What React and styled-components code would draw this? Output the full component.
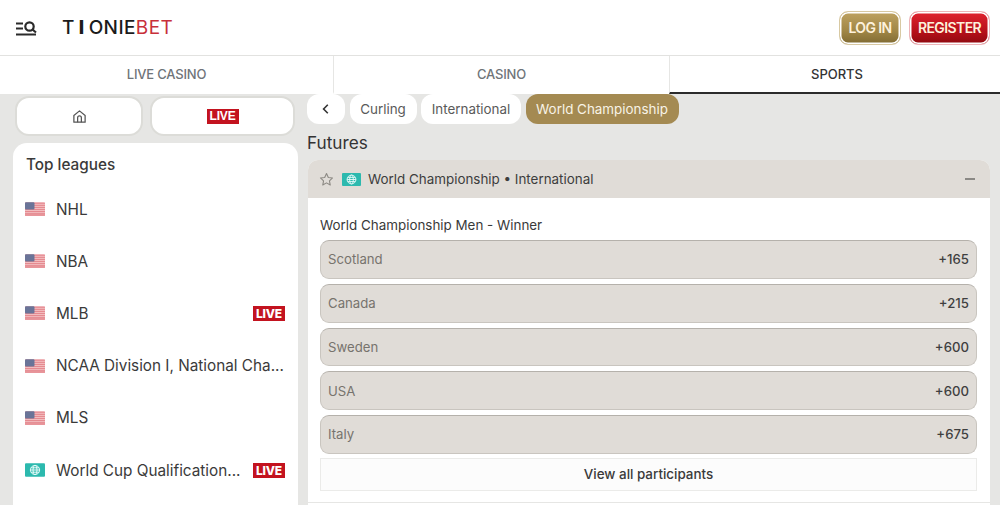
import React from "react";
import styled, { createGlobalStyle } from "styled-components";

const Global = createGlobalStyle`
  html, body { margin: 0; padding: 0; background: #e6e6e4; }
  body { font-family: Inter, "Liberation Sans", sans-serif; color: #2d2d2d; }
  * { box-sizing: border-box; }
`;

const Page = styled.div`
  width: 1000px; height: 505px; overflow: hidden; background: #e6e6e4;
  display: flex; flex-direction: column;
`;
const Header = styled.header`
  height: 56px; flex: none; background: #fff; border-bottom: 1px solid #e2e2e0;
  display: flex; align-items: center; padding: 0 10px 0 16px;
`;
const MenuIcon = styled.svg`width: 21px; height: 15px; flex: none; margin-top: 1px;`;
const Logo = styled.div`
  margin-left: 25px; font-size: 19px; font-weight: 500; letter-spacing: 0.4px; color: #1b1b1b; line-height: 1;
  display: flex; align-items: center;
`;
const LogoGap = styled.span`margin-right: ${p => p.$m}px;`;
const LogoHeavy = styled.span`font-weight: 800; margin-right: 4px;`;
const LogoRed = styled.span`color: #c8303a; font-weight: 400;`;
const Actions = styled.div`margin-left: auto; display: flex; gap: 8px;`;
const AuthButton = styled.button`
  height: 34px; width: ${p => p.$w}px; border-radius: 9px; padding: 0;
  border: 1px solid ${p => p.$red ? "#eeb4b8" : "#d8c9a2"};
  box-shadow: inset 0 0 0 1.5px #fff;
  background: ${p => p.$red ? "linear-gradient(#e0222f, #b30f18 65%, #8e0a10)" : "linear-gradient(#bea261, #a08645 60%, #7f6a32)"};
  color: #fdf1dc; font: 600 14px Inter, sans-serif; letter-spacing: -0.6px;
`;
const Tabs = styled.nav`
  height: 38px; flex: none; background: #fff; display: grid; grid-template-columns: 333px 336px 331px;
`;
const Tab = styled.div`
  display: flex; align-items: center; justify-content: center; font-size: 13px; font-weight: 500;
  padding-bottom: 1px;
  padding-left: ${p => p.$active ? 4 : 0}px;
  color: ${p => p.$active ? "#333" : "#6f7479"};
  border-left: ${p => p.$first ? "none" : "1px solid #e6e6e4"};
  border-bottom: 2px solid ${p => p.$active ? "#2b2b2b" : "transparent"};
  letter-spacing: ${p => p.$active ? "0" : "-0.2px"};
`;
const Body = styled.div`flex: 1; min-height: 0; display: flex; align-items: flex-start;`;
const Sidebar = styled.aside`width: 298px; flex: none; padding: 2px 0 0 13px; display: flex; flex-direction: column; gap: 7px;`;
const QuickRow = styled.div`display: flex; gap: 7px; padding: 0 2px;`;
const QuickButton = styled.button`
  height: 40px; width: ${p => p.$w}px; background: #fff; border-radius: 14px; padding: 0;
  border: 2px solid #dcdcd8; display: flex; align-items: center; justify-content: center;
`;
const LiveBadge = styled.span`
  display: inline-block; background: #c3131f; color: #fff; font-size: 12px; font-weight: 800; line-height: 15px; height: 15px;
  width: 32px; text-align: center; letter-spacing: -0.2px; flex: none;
`;
const Panel = styled.section`
  width: 285px; height: 370px; background: #fff; border-radius: 14px 14px 0 0; padding: 12px 13px 0 13px;
`;
const PanelTitle = styled.h2`margin: 0 0 8px; font-size: 15.300px; line-height: 20px; font-weight: 500; color: #3a3a3a;`;
const League = styled.div`display: flex; align-items: center; height: 52.2px; margin-left: -1px; font-size: 15.300px; color: #3a3a3a;`;
const FlagIcon = styled.svg`width: 20px; height: 14px; flex: none; margin-right: 11px;`;
const LeagueName = styled.span`flex: 1; min-width: 0; white-space: nowrap;`;
const Main = styled.main`width: 682px; margin-left: 10px; flex: none; display: flex; flex-direction: column;`;
const Crumbs = styled.div`display: flex; gap: 4.5px; height: 30px; align-items: stretch; margin-left: -1px;`;
const Crumb = styled.div`
  display: flex; align-items: center; justify-content: center; border-radius: 12px; font-size: 13.400px;
  width: ${p => p.$w}px;
  background: ${p => p.$active ? "#a48a52" : "#fff"};
  color: ${p => p.$active ? "#f8f3e6" : "#5a5a5a"};
`;
const Heading = styled.h1`margin: 8px 0 6px -1px; font-size: 17.200px; line-height: 22px; font-weight: 400; color: #333;`;
const Card = styled.section`background: #fff; border-radius: 10px 10px 0 0; overflow: hidden; height: 346px;`;
const CardHead = styled.div`
  height: 38px; background: #e0dcd7; display: flex; align-items: center; padding: 0 15px 0 11px; font-size: 13.400px; color: #3d3d3d;
`;
const StarIcon = styled.svg`width: 15px; height: 15px; flex: none; margin-right: 8px;`;
const HeadFlag = styled.svg`width: 19px; height: 13px; flex: none; margin-right: 7px;`;
const Collapse = styled.span`margin-left: auto; width: 10px; height: 1.5px; background: #8b8985;`;
const CardBody = styled.div`padding: 18px 13px 0 12px;`;
const MarketTitle = styled.div`font-size: 13.400px; line-height: 18px; color: #3a3a3a; margin-bottom: 6px;`;
const Odds = styled.div`display: flex; flex-direction: column; gap: 5px;`;
const Odd = styled.div`
  height: 38.75px; background: #e0dcd7; border-radius: 9px; border: 1px solid #c9c5bf; border-top-color: #b5b1ab;
  display: flex; align-items: center; justify-content: space-between; padding: 0 7px; font-size: 13.200px;
`;
const OddName = styled.span`color: #77736d;`;
const OddPrice = styled.span`color: #3f3f3f; font-weight: 500;`;
const ViewAll = styled.div`
  margin-top: 4px; height: 33px; border: 1px solid #ebebe9; background: #fcfcfc;
  display: flex; align-items: center; justify-content: center; font-size: 13.400px; font-weight: 500; color: #3a3a3a;
`;
const Divider = styled.div`height: 1px; background: #e6e6e4; margin: 11px -13px 0 -12px;`;

const UsFlag = () => (
  <FlagIcon viewBox="0 0 19 13">
    <rect width="19" height="13" rx="1.5" fill="#f5c6c8" />
    {[0, 2, 4, 6, 8, 10].map(y => <rect key={y} y={y + 0.4} width="19" height="1.2" fill="#e58a90" />)}
    <rect y="11.5" width="19" height="1.5" fill="#e58a90" />
    <rect width="9" height="7" rx="1" fill="#6a7498" />
  </FlagIcon>
);
const Globe = ({ as: C = FlagIcon }) => (
  <C viewBox="0 0 19 13">
    <rect width="19" height="13" rx="1" fill="#2cb9ae" />
    <g fill="none" stroke="#e8fbf9" strokeWidth="0.9">
      <circle cx="9.5" cy="6.5" r="4.4" />
      <ellipse cx="9.5" cy="6.5" rx="1.9" ry="4.4" />
      <path d="M5.100 6.500h8.800M5.800 4.400h7.400M5.800 8.600h7.400" />
    </g>
  </C>
);

const leagues = [
  { name: "NHL" },
  { name: "NBA" },
  { name: "MLB", live: true },
  { name: "NCAA Division I, National Cha..." },
  { name: "MLS" },
  { name: "World Cup Qualification...", live: true, globe: true },
];
const odds = [["Scotland", "+165"], ["Canada", "+215"], ["Sweden", "+600"], ["USA", "+600"], ["Italy", "+675"]];

export default function App() {
  return (
    <Page>
      <Global />
      <Header>
        <MenuIcon viewBox="0 0 21 15" fill="none" stroke="#2a2a2a" strokeWidth="2.2">
          <path d="M0 2.500h7M0 7.500h7M0 13.500h20" />
          <circle cx="13.500" cy="5.500" r="4.200" />
          <path d="M16.500 8.500l3.500 3" />
        </MenuIcon>
        <Logo>
          <LogoGap $m={4}>T</LogoGap>
          <LogoHeavy>I</LogoHeavy>
          ONIE<LogoRed>BET</LogoRed>
        </Logo>
        <Actions>
          <AuthButton $w={62}>LOG IN</AuthButton>
          <AuthButton $red $w={81}>REGISTER</AuthButton>
        </Actions>
      </Header>
      <Tabs>
        <Tab $first>LIVE CASINO</Tab>
        <Tab>CASINO</Tab>
        <Tab $active>SPORTS</Tab>
      </Tabs>
      <Body>
        <Sidebar>
          <QuickRow>
            <QuickButton $w={128}>
              <svg width="15" height="15" viewBox="0 0 24 24" fill="none" stroke="#555" strokeWidth="2" strokeLinejoin="round">
                <path d="M3 10.500 12 3l9 7.500V21H3z" />
                <path d="M9 21v-7a3 3 0 0 1 6 0v7" />
              </svg>
            </QuickButton>
            <QuickButton $w={145}><LiveBadge>LIVE</LiveBadge></QuickButton>
          </QuickRow>
          <Panel>
            <PanelTitle>Top leagues</PanelTitle>
            {leagues.map(l => (
              <League key={l.name}>
                {l.globe ? <Globe /> : <UsFlag />}
                <LeagueName>{l.name}</LeagueName>
                {l.live && <LiveBadge>LIVE</LiveBadge>}
              </League>
            ))}
          </Panel>
        </Sidebar>
        <Main>
          <Crumbs>
            <Crumb $w={38}>
              <svg width="12" height="12" viewBox="0 0 12 12" fill="none" stroke="#333" strokeWidth="1.600"><path d="M7.800 1.800 3.600 6l4.200 4.200" /></svg>
            </Crumb>
            <Crumb $w={67}>Curling</Crumb>
            <Crumb $w={100}>International</Crumb>
            <Crumb $active $w={153}>World Championship</Crumb>
          </Crumbs>
          <Heading>Futures</Heading>
          <Card>
            <CardHead>
              <StarIcon viewBox="0 0 24 24" fill="none" stroke="#8d8a84" strokeWidth="1.800" strokeLinejoin="round">
                <path d="M12 2.500l2.900 6.200 6.800.8-5 4.600 1.300 6.700-6-3.400-6 3.400 1.300-6.700-5-4.600 6.800-.8z" />
              </StarIcon>
              <Globe as={HeadFlag} />
              World Championship • International
              <Collapse />
            </CardHead>
            <CardBody>
              <MarketTitle>World Championship Men - Winner</MarketTitle>
              <Odds>
                {odds.map(([n, p]) => (
                  <Odd key={n}><OddName>{n}</OddName><OddPrice>{p}</OddPrice></Odd>
                ))}
              </Odds>
              <ViewAll>View all participants</ViewAll>
              <Divider />
            </CardBody>
          </Card>
        </Main>
      </Body>
    </Page>
  );
}
